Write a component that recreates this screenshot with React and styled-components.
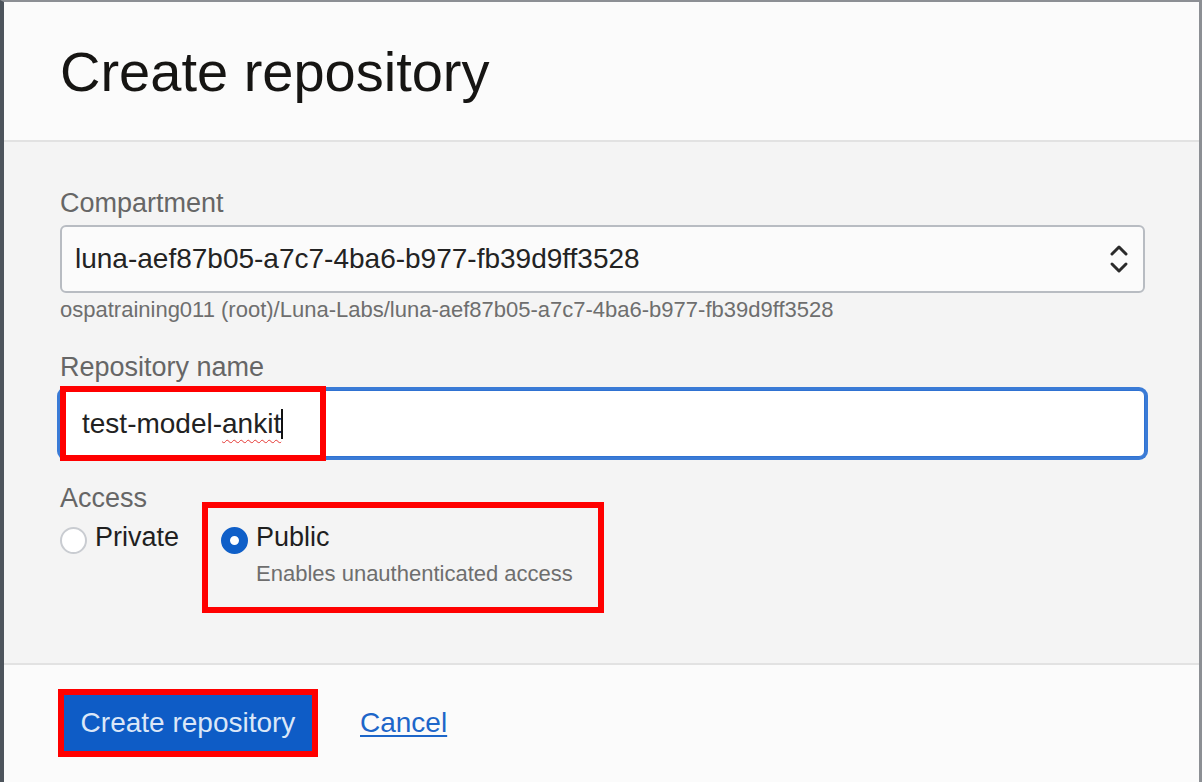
import React from "react";
import styled, { createGlobalStyle } from "styled-components";

const Global = createGlobalStyle`
  html, body { margin: 0; padding: 0; background: #fbfbfb; }
  * { box-sizing: border-box; }
  body { font-family: "Liberation Sans", Arial, sans-serif; }
`;

const Dialog = styled.div`
  width: 1202px;
  height: 782px;
  display: flex;
  flex-direction: column;
  border-left: 4px solid #4d545c;
  border-top: 2px solid #8c8f94;
  border-right: 3px solid #8c8f94;
  background: #fbfbfb;
  overflow: hidden;
`;

const Header = styled.header`
  height: 140px;
  padding: 42px 0 0 56px;
  background: #fbfbfb;
  border-bottom: 2px solid #e2e2e2;
  flex-shrink: 0;
`;

const Title = styled.h1`
  margin: 0;
  font-size: 56px;
  line-height: 56px;
  font-weight: 400;
  color: #161513;
`;

const Body = styled.main`
  background: #f4f4f4;
  padding: 45px 54px 50px 56px;
  display: flex;
  flex-direction: column;
  border-bottom: 2px solid #e2e2e2;
  flex-shrink: 0;
`;

const Label = styled.div`
  font-size: 27px;
  line-height: 32px;
  color: #666666;
  margin: ${(p) => p.$top || 0}px 0 ${(p) => (p.$bottom == null ? 6 : p.$bottom)}px;
`;

const Select = styled.div`
  height: 68px;
  border: 2px solid #b8bcc2;
  border-radius: 6px;
  background: #fbfbfb;
  display: flex;
  align-items: center;
  justify-content: space-between;
  padding: 0 14px 0 13px;
  font-size: 28px;
  color: #232323;
`;

const Helper = styled.div`
  font-size: 22px;
  line-height: 26px;
  color: #6e6e6e;
  margin-top: 4px;
`;

const InputWrap = styled.div`
  position: relative;
  margin-top: 1px;
`;

const Input = styled.div`
  height: 67px;
  border: 1px solid #2f72d2;
  box-shadow: 0 0 0 3px #3a7bd6;
  border-radius: 6px;
  background: #ffffff;
  display: flex;
  align-items: center;
  padding-left: 21px;
  font-size: 28px;
  color: #222;
`;

const Misspelled = styled.span`
  text-decoration: underline wavy #e53935;
  text-decoration-thickness: 1px;
  text-underline-offset: 6px;
`;

const Caret = styled.span`
  display: inline-block;
  width: 2px;
  height: 30px;
  background: #111;
  vertical-align: middle;
`;

const HighlightOverlay = styled.div`
  position: absolute;
  left: 0;
  top: -4px;
  width: 266px;
  height: 75px;
  border: 6px solid #ff0000;
  pointer-events: none;
`;

const RadioGroup = styled.div`
  display: flex;
  align-items: flex-start;
  margin-top: -12px;
`;

const Option = styled.label`
  display: flex;
  align-items: flex-start;
  gap: 8px;
  padding-top: ${(p) => p.$pt || 0}px;
`;

const Highlight = styled.div`
  border: 6px solid #ff0000;
  padding: ${(p) => p.$pad};
  width: ${(p) => (p.$w ? `${p.$w}px` : "auto")};
  margin-left: ${(p) => p.$ml || 0}px;
`;

const Radio = styled.span`
  width: 27px;
  height: 27px;
  border-radius: 50%;
  flex-shrink: 0;
  margin-top: 6px;
  background: #ffffff;
  border: ${(p) => (p.$checked ? "9px solid #0f5fc8" : "2px solid #c9ccd1")};
`;

const OptionText = styled.div`
  display: flex;
  flex-direction: column;
`;

const OptionLabel = styled.span`
  font-size: 27px;
  line-height: 32px;
  color: #1f1f1f;
`;

const OptionHint = styled.span`
  font-size: 22px;
  line-height: 26px;
  color: #6e6e6e;
  margin-top: 8px;
`;

const Footer = styled.footer`
  flex: 1;
  background: #fbfbfb;
  padding: 24px 0 0 54px;
  display: flex;
  align-items: flex-start;
  gap: 42px;
`;

const PrimaryButton = styled.button`
  width: 248px;
  height: 56px;
  border: none;
  background: #0e5cc6;
  color: #dbe7f8;
  font-family: "Liberation Sans", Arial, sans-serif;
  font-size: 28px;
  padding: 0;
  display: block;
`;

const CancelLink = styled.a`
  font-size: 28px;
  color: #1d66c9;
  text-decoration: underline;
  text-underline-offset: 3px;
  margin-top: 18px;
  line-height: 32px;
  cursor: pointer;
`;

const Chevrons = () => (
  <svg width="20" height="32" viewBox="0 0 20 32" fill="none">
    <path d="M3 11 L10 4 L17 11" stroke="#2b2b2b" strokeWidth="3" strokeLinecap="round" strokeLinejoin="round" />
    <path d="M3 21 L10 28 L17 21" stroke="#2b2b2b" strokeWidth="3" strokeLinecap="round" strokeLinejoin="round" />
  </svg>
);

export default function App() {
  return (
    <>
      <Global />
      <Dialog>
        <Header>
          <Title>Create repository</Title>
        </Header>
        <Body>
          <Label>Compartment</Label>
          <Select>
            <span>luna-aef87b05-a7c7-4ba6-b977-fb39d9ff3528</span>
            <Chevrons />
          </Select>
          <Helper>ospatraining011 (root)/Luna-Labs/luna-aef87b05-a7c7-4ba6-b977-fb39d9ff3528</Helper>
          <Label $top={28}>Repository name</Label>
          <InputWrap>
            <Input>
              test-model-<Misspelled>ankit</Misspelled>
              <Caret />
            </Input>
            <HighlightOverlay />
          </InputWrap>
          <Label $top={25} $bottom={0}>Access</Label>
          <RadioGroup>
            <Option $pt={19}>
              <Radio />
              <OptionLabel>Private</OptionLabel>
            </Option>
            <Highlight $pad="13px 0 20px 13px" $w={402} $ml={23}>
              <Option>
                <Radio $checked />
                <OptionText>
                  <OptionLabel>Public</OptionLabel>
                  <OptionHint>Enables unauthenticated access</OptionHint>
                </OptionText>
              </Option>
            </Highlight>
          </RadioGroup>
        </Body>
        <Footer>
          <Highlight $pad="0">
            <PrimaryButton>Create repository</PrimaryButton>
          </Highlight>
          <CancelLink>Cancel</CancelLink>
        </Footer>
      </Dialog>
    </>
  );
}
